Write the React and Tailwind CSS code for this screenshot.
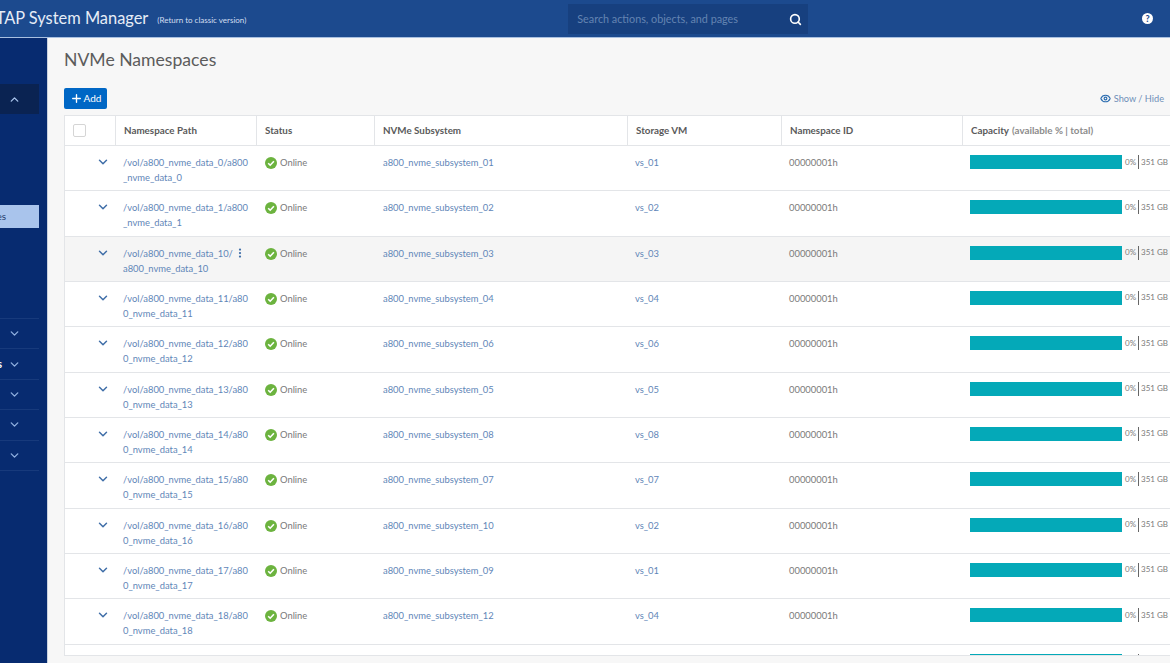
import { ChevronDown, ChevronUp, Plus, Search, Eye, EllipsisVertical } from 'lucide-react';

const cols = 'grid grid-cols-[51px_141px_118px_253px_154px_181px_1fr]';

const rows = [
  ['/vol/a800_nvme_data_0/a800', '_nvme_data_0', '01', '01'],
  ['/vol/a800_nvme_data_1/a800', '_nvme_data_1', '02', '02'],
  ['/vol/a800_nvme_data_10/', 'a800_nvme_data_10', '03', '03'],
  ['/vol/a800_nvme_data_11/a80', '0_nvme_data_11', '04', '04'],
  ['/vol/a800_nvme_data_12/a80', '0_nvme_data_12', '06', '06'],
  ['/vol/a800_nvme_data_13/a80', '0_nvme_data_13', '05', '05'],
  ['/vol/a800_nvme_data_14/a80', '0_nvme_data_14', '08', '08'],
  ['/vol/a800_nvme_data_15/a80', '0_nvme_data_15', '07', '07'],
  ['/vol/a800_nvme_data_16/a80', '0_nvme_data_16', '10', '02'],
  ['/vol/a800_nvme_data_17/a80', '0_nvme_data_17', '09', '01'],
  ['/vol/a800_nvme_data_18/a80', '0_nvme_data_18', '12', '04'],
  ['/vol/a800_nvme_data_19/a80', '0_nvme_data_19', '11', '03'],
];

function OnlineIcon() {
  return (
    <svg width="12" height="12" viewBox="0 0 12 12" className="shrink-0">
      <circle cx="6" cy="6" r="6" fill="#6cb33f" />
      <path d="M3.2 6.2 5.2 8.2 8.9 4.2" fill="none" stroke="#fff" strokeWidth="1.6" />
    </svg>
  );
}

function SideRow({ label }) {
  return (
    <div className="h-[30.4px] w-[39px] border-t border-[#173a7c] flex items-center justify-end overflow-hidden pr-[18px] gap-[6px]">
      {label && <span className="text-[11px] font-bold text-white whitespace-nowrap">{label}</span>}
      <ChevronDown size={13} strokeWidth={2.5} className="text-[#8fb0e0] shrink-0" />
    </div>
  );
}

function Row({ row, hover }) {
  return (
    <div className={`${cols} h-[45.33px] border-b border-[#e3e5e8] text-[9.4px] leading-[15px] text-[#7a7a7a] ${hover ? 'bg-[#f5f5f5]' : 'bg-white'}`}>
      <div className="flex justify-end pr-[6px] pt-[9px]">
        <ChevronDown size={14} strokeWidth={2.5} className="text-[#3f6ea8]" />
      </div>
      <div className="relative pl-[7px] pt-[9px] text-[#5f86b8] whitespace-nowrap">
        <div>{row[0]}</div>
        <div>{row[1]}</div>
        {hover && <EllipsisVertical size={12} strokeWidth={2.5} className="absolute left-[118px] top-[10px] text-[#3f6ea8]" />}
      </div>
      <div className="pl-[8px] pt-[9px] flex items-start gap-[3px]">
        <div className="pt-[2px]"><OnlineIcon /></div>
        <span>Online</span>
      </div>
      <div className="pl-[8px] pt-[9px] text-[#5f86b8]">a800_nvme_subsystem_{row[2]}</div>
      <div className="pl-[7px] pt-[9px] text-[#5f86b8]">vs_{row[3]}</div>
      <div className="pl-[7px] pt-[9px]">00000001h</div>
      <div className="pl-[7px] pt-[9px] flex items-start">
        <div className="w-[152px] h-[14px] bg-[#04a9b8] shrink-0" />
        <div className="flex items-center h-[14px] ml-[3px] text-[8px] whitespace-nowrap">
          <span>0%</span>
          <span className="w-px h-[14px] bg-[#666] mx-[2px]" />
          <span>351 GB</span>
        </div>
      </div>
    </div>
  );
}

export default function App() {
  return (
    <div className="h-[663px] w-[1170px] overflow-hidden flex flex-col bg-[#f7f7f7] font-['Lato','Noto_Sans',sans-serif]">
      {/* top bar */}
      <header className="h-[38px] shrink-0 bg-[#1c4a8e] border-b border-[#a9c0e0] flex items-center relative">
        <div className="ml-[-30px] text-[16.4px] text-[#e6edf7] whitespace-nowrap">ONTAP System Manager</div>
        <div className="ml-[9px] mt-[3px] text-[8px] text-[#d3dff0] whitespace-nowrap">(Return to classic version)</div>
        <div className="ml-[322px] w-[240px] h-[30px] mt-[1px] bg-[#17407f] flex items-center pl-[9px] pr-[6px] justify-between">
          <span className="text-[10.8px] text-[#6484b2]">Search actions, objects, and pages</span>
          <Search size={13} strokeWidth={3} className="text-white" />
        </div>
        <div className="ml-auto mr-[17px] w-[11px] h-[11px] rounded-full bg-white text-[#1c4a8e] text-[9px] font-black flex items-center justify-center">?</div>
      </header>

      <div className="flex-1 flex min-h-0">
        {/* collapsed side nav */}
        <aside className="w-[47px] shrink-0 bg-[#072b70] pt-[46px] overflow-hidden">
          <div className="w-[39px] h-[30px] bg-[#0a2352] flex items-center justify-end pr-[18px]">
            <ChevronUp size={13} strokeWidth={2.5} className="text-[#a9c4ec]" />
          </div>
          <div className="h-[91px]" />
          <div className="w-[39px] h-[23px] bg-[#a9c4ec] flex items-center justify-end overflow-hidden text-[10px] text-[#1d3a6b] whitespace-nowrap pr-[33px]">
            <span>NVMe Namespaces</span>
          </div>
          <div className="h-[90px]" />
          <SideRow />
          <SideRow label="Events & Jobs" />
          <SideRow />
          <SideRow />
          <SideRow />
          <div className="w-[39px] border-t border-[#173a7c]" />
        </aside>

        {/* main */}
        <main className="flex-1 min-w-0 border-l border-[#c9d2df] pl-[16px] overflow-hidden flex flex-col">
          <h1 className="text-[17.6px] leading-[24px] text-[#5c5c5c] mt-[10px] whitespace-nowrap">NVMe Namespaces</h1>
          <div className="mt-[16px] h-[21px] w-[1114px] flex items-center justify-between">
            <button className="w-[43px] h-[21px] bg-[#0067c5] rounded-[2px] text-white text-[10px] flex items-center justify-center gap-[1px]">
              <Plus size={13} strokeWidth={2.5} />
              Add
            </button>
            <div className="flex items-center gap-[3px] text-[9.2px] text-[#6f8fb8] whitespace-nowrap">
              <Eye size={11} strokeWidth={2.5} className="text-[#2c6db0]" />
              <span>Show / Hide</span>
              <ChevronDown size={10} className="ml-[1px]" />
            </div>
          </div>

          <div className="mt-[6px] h-[541px] w-[1112px] overflow-hidden bg-white border border-[#e3e5e8]">
            <div className={`${cols} h-[30px] border-b border-[#e3e5e8] text-[9.8px] font-bold text-[#5a5a5a]`}>
              <div className="flex items-center pl-[8px] border-r border-[#e3e5e8]">
                <div className="w-[13px] h-[13px] bg-white border border-[#d5d5d5] rounded-[2px]" />
              </div>
              <div className="flex items-center pl-[8px] border-r border-[#e3e5e8]">Namespace Path</div>
              <div className="flex items-center pl-[8px] border-r border-[#e3e5e8]">Status</div>
              <div className="flex items-center pl-[8px] border-r border-[#e3e5e8]">NVMe Subsystem</div>
              <div className="flex items-center pl-[8px] border-r border-[#e3e5e8]">Storage VM</div>
              <div className="flex items-center pl-[8px] border-r border-[#e3e5e8]">Namespace ID</div>
              <div className="flex items-center pl-[8px]">
                Capacity<span className="ml-[3px] text-[#8c8c8c]">(available % | total)</span>
              </div>
            </div>
            {rows.map((r, i) => (
              <Row key={i} row={r} hover={i === 2} />
            ))}
          </div>
        </main>
      </div>
    </div>
  );
}
